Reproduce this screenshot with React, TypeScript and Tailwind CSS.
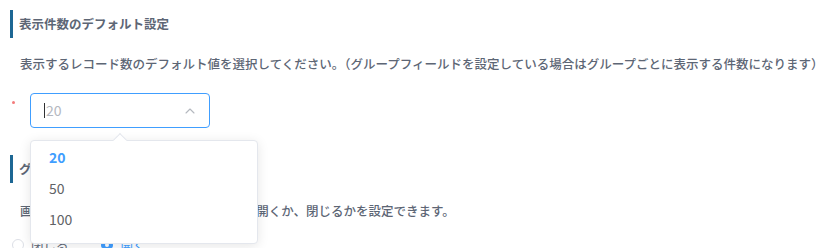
import React from "react";

const FONT = {
  fontFamily: '"Noto Sans CJK JP", "Noto Sans", sans-serif',
};

function SectionHeading({ children }: { children: React.ReactNode }) {
  return (
    <div className="flex h-[28px] items-center border-l-[3px] border-[#1d6794] pl-[6px] text-[12.5px] font-bold text-[#5d6675]">
      {children}
    </div>
  );
}

export default function App() {
  const options = ["20", "50", "100"];
  const selected = "20";

  return (
    <div
      className="relative h-[248px] w-[826px] overflow-hidden bg-white pl-[10px] pt-[10px]"
      style={FONT}
    >
      {/* 表示件数 */}
      <SectionHeading>表示件数のデフォルト設定</SectionHeading>
      <p className="mt-[16px] whitespace-nowrap pl-[10px] text-[12.5px] font-medium leading-[20px] text-[#5d6675]">
        表示するレコード数のデフォルト値を選択してください。（グループフィールドを設定している場合はグループごとに表示する件数になります）
      </p>

      <div className="relative mt-[19px] flex items-start">
        <span className="mt-[8px] ml-[2px] h-[3px] w-[3px] rounded-full bg-[#f37b7b]" />
        <div className="ml-[15px] flex h-[35px] w-[180px] items-center justify-between rounded-[4px] border border-[#409eff] pl-[13px] pr-[13px]">
          <div className="flex items-center text-[14px] text-[#b4b8bf]">
            <span className="mr-[1px] h-[15px] w-px bg-[#303133]" />
            20
          </div>
          <svg width="12" height="12" viewBox="0 0 12 12" fill="none">
            <path
              d="M2 8 L6 4 L10 8"
              stroke="#b4b8bf"
              strokeWidth="1.1"
              strokeLinecap="round"
              strokeLinejoin="round"
            />
          </svg>
        </div>

        {/* dropdown */}
        <div className="absolute left-[20px] top-[47px] z-10 w-[228px] rounded-[4px] border border-[#e4e7ed] bg-white pt-[1px] pb-[8px] shadow-[0_2px_12px_rgba(0,0,0,0.1)]">
          <div className="absolute -top-[6px] left-[84px] h-[10px] w-[10px] rotate-45 border-l border-t border-[#e4e7ed] bg-white" />
          {options.map((o) => (
            <div
              key={o}
              className={
                "relative flex h-[31px] items-center pl-[18px] text-[14px] " +
                (o === selected
                  ? "font-bold text-[#409eff]"
                  : "text-[#606266]")
              }
            >
              {o}
            </div>
          ))}
        </div>
      </div>

      {/* グループ */}
      <div className="mt-[27px]">
        <SectionHeading>グループの表示設定</SectionHeading>
      </div>
      <p className="mt-[18px] whitespace-nowrap pl-[10px] text-[12.5px] font-medium leading-[20px] text-[#5d6675]">
        画面を開いた時に、グループフィールドを開くか、閉じるかを設定できます。
      </p>

      <div className="mt-[15px] flex items-center text-[12.5px] text-[#5d6675]">
        <label className="flex items-center">
          <span className="ml-[2px] h-[12px] w-[12px] rounded-full border border-[#dcdfe6] bg-white" />
          <span className="ml-[7px]">閉じる</span>
        </label>
        <label className="ml-[32px] flex items-center">
          <span className="flex h-[12px] w-[12px] items-center justify-center rounded-full border border-[#409eff] bg-[#409eff]">
            <span className="h-[4px] w-[4px] rounded-full bg-white" />
          </span>
          <span className="ml-[8px] text-[#409eff]">開く</span>
        </label>
      </div>
    </div>
  );
}
